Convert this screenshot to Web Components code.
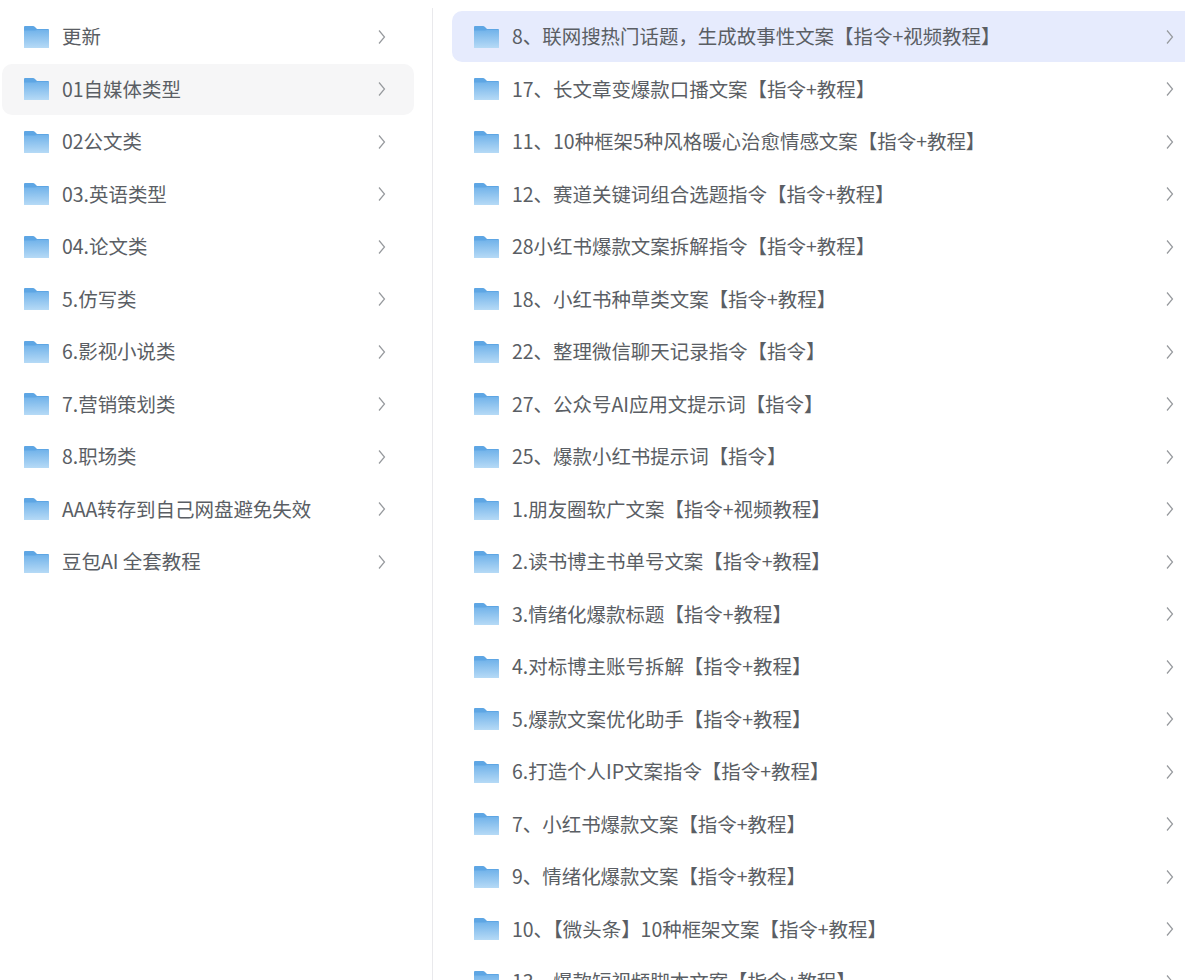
<!DOCTYPE html>
<html lang="zh">
<head>
<meta charset="utf-8">
<style>
    html, body { margin: 0; height: 100%; overflow: hidden; background: #fff; }
    body { font-family: "Noto Sans CJK SC", "Noto Sans", sans-serif; }
</style>
</head>
<body>
<folder-browser>
    <folder-list slot="left" id="left"></folder-list>
    <folder-list slot="right" id="right"></folder-list>
</folder-browser>
<script>
class FolderBrowser extends HTMLElement {
    constructor() {
        super();
        this.attachShadow({ mode: 'open' });
    }

    connectedCallback() {
        this.shadowRoot.innerHTML = `
            <style>
                :host {
                    display: grid;
                    grid-template-columns: 433px 1fr;
                    height: 980px;
                    overflow: hidden;
                }
                .left {
                    margin-top: 8px;
                    padding: 3px 18px 0 2px;
                    border-right: 1px solid #e9e9ec;
                }
                .right {
                    /* rows run on past the window edge */
                    margin-right: -17px;
                    padding: 11px 0 0 19px;
                }
            </style>
            <div class="left"><slot name="left"></slot></div>
            <div class="right"><slot name="right"></slot></div>
        `;
    }
}

class FolderList extends HTMLElement {
    constructor() {
        super();
        this.attachShadow({ mode: 'open' });
    }

    connectedCallback() {
        this.shadowRoot.innerHTML = `
            <style>
                :host {
                    display: flex;
                    flex-direction: column;
                    gap: 1.5px;
                }
            </style>
            <slot></slot>
        `;
    }
}

class FolderRow extends HTMLElement {
    constructor() {
        super();
        this.attachShadow({ mode: 'open' });
    }

    connectedCallback() {
        const id = 'g' + Math.random().toString(36).slice(2);
        this.shadowRoot.innerHTML = `
            <style>
                :host {
                    display: flex;
                    align-items: center;
                    flex: none;
                    height: 51px;
                    padding: 0 12px 0 22px;
                    border-radius: 10px;
                    font-size: 19.47px;
                    color: #5a5e64;
                    white-space: nowrap;
                }
                :host([hovered]) { background: #f6f6f7; }
                :host([active]) { background: #e6ebfd; }
                .folder { flex: none; width: 25px; height: 24px; margin-right: 13px; filter: blur(0.3px); }
                .text { flex: 1; min-width: 0; padding-bottom: 2px; }
                .arrow { flex: none; width: 10px; height: 16px; margin-right: 15px; }
            </style>
            <svg class="folder" viewBox="0 0 25 24">
                <defs>
                    <linearGradient id="${id}" x1="0" y1="0" x2="0" y2="1">
                        <stop offset="0" stop-color="#72b3ea"></stop>
                        <stop offset="1" stop-color="#b6daf6"></stop>
                    </linearGradient>
                </defs>
                <path d="M0 2 Q0 1 1 1 H9 Q10 1 11 2 L13 4 H24 Q25 4 25 5 V23 H0 Z" fill="#5ea6e4"></path>
                <path d="M0 5.5 H11 L13 5 H25 V23 H0 Z" fill="url(#${id})"></path>
            </svg>
            <span class="text"><slot></slot></span>
            <svg class="arrow" viewBox="0 0 10 16" fill="none" stroke="#96999d" stroke-width="1.2">
                <path d="M2 1.5 L7.5 8 L2 14.5"></path>
            </svg>
        `;
    }
}

customElements.define('folder-browser', FolderBrowser);
customElements.define('folder-list', FolderList);
customElements.define('folder-row', FolderRow);

const leftItems = ['更新', '01自媒体类型', '02公文类', '03.英语类型', '04.论文类', '5.仿写类', '6.影视小说类',
    '7.营销策划类', '8.职场类', 'AAA转存到自己网盘避免失效', '豆包AI 全套教程'];
const rightItems = ['8、联网搜热门话题，生成故事性文案【指令+视频教程】', '17、长文章变爆款口播文案【指令+教程】',
    '11、10种框架5种风格暖心治愈情感文案【指令+教程】', '12、赛道关键词组合选题指令【指令+教程】',
    '28小红书爆款文案拆解指令【指令+教程】', '18、小红书种草类文案【指令+教程】', '22、整理微信聊天记录指令【指令】',
    '27、公众号AI应用文提示词【指令】', '25、爆款小红书提示词【指令】', '1.朋友圈软广文案【指令+视频教程】',
    '2.读书博主书单号文案【指令+教程】', '3.情绪化爆款标题【指令+教程】', '4.对标博主账号拆解【指令+教程】',
    '5.爆款文案优化助手【指令+教程】', '6.打造个人IP文案指令【指令+教程】', '7、小红书爆款文案【指令+教程】',
    '9、情绪化爆款文案【指令+教程】', '10、【微头条】10种框架文案【指令+教程】', '13、爆款短视频脚本文案【指令+教程】'];

function fill(list, items, flagIndex, flag) {
    items.forEach((text, i) => {
        const row = document.createElement('folder-row');
        row.textContent = text;
        if (i === flagIndex) row.setAttribute(flag, '');
        list.appendChild(row);
    });
}

fill(document.getElementById('left'), leftItems, 1, 'hovered');
fill(document.getElementById('right'), rightItems, 0, 'active');
</script>
</body>
</html>
